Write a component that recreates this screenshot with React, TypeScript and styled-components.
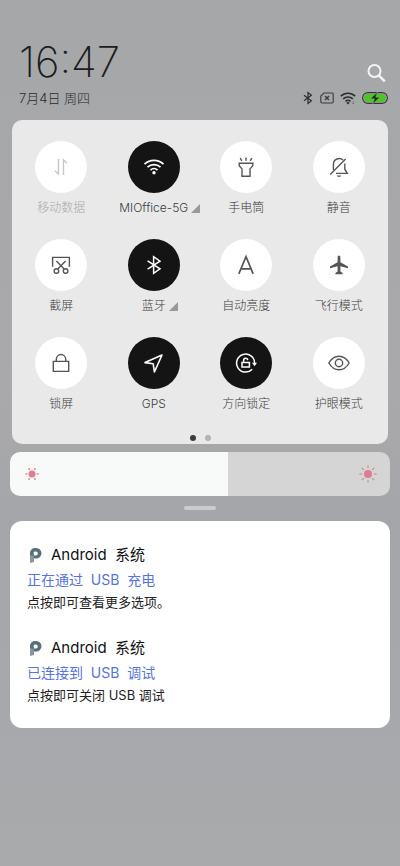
import React, { useState } from "react";
import styled, { createGlobalStyle } from "styled-components";

const GlobalStyle = createGlobalStyle`
  *, *::before, *::after { box-sizing: border-box; }
  body {
    margin: 0;
    min-height: 100vh;
    background: linear-gradient(180deg, #a6a7a9 0%, #a9a9ab 45%, #a5a6aa 60%, #a9aaac 100%);
    font-family: Inter, "Noto Sans CJK SC", sans-serif;
    font-weight: 300;
    color: #1c1c1c;
  }
  button { font: inherit; color: inherit; border: 0; padding: 0; background: none; cursor: pointer; }
  h2, p { margin: 0; font-weight: inherit; }
  svg { display: block; }
`;

const Shade = styled.main`
  display: flex;
  flex-direction: column;
  padding: 36px 10px 24px;
`;

const Header = styled.header`
  display: flex;
  flex-direction: column;
  padding: 0 2px 0 9px;
`;

const HeaderRow = styled.div`
  display: flex;
  justify-content: space-between;
  align-items: center;
`;

const Clock = styled.time`
  font-size: 42px;
  line-height: 52px;
  font-weight: 200;
`;

const SearchButton = styled.button`
  align-self: flex-end;
  padding: 0 2px 5px;
`;

const DateText = styled.time`
  font-size: 13px;
  line-height: 20px;
  color: #2a2a2a;
`;

const StatusIcons = styled.div`
  display: flex;
  align-items: center;
  gap: 6px;
`;

const Panel = styled.section`
  margin: 12px 2px 0;
  padding: 21px 3px 0;
  border-radius: 10px;
  background: #e9e9e9;
`;

const TileGrid = styled.div`
  display: grid;
  grid-template-columns: repeat(4, minmax(0, 1fr));
  row-gap: 21px;
`;

const Tile = styled.button<{ $muted?: boolean }>`
  display: flex;
  flex-direction: column;
  align-items: center;
  gap: 5px;
  font-size: 12px;
  line-height: 20px;
  white-space: nowrap;
  color: ${(p) => (p.$muted ? "#a8a8a8" : "#3c3c3c")};
`;

const TileDisc = styled.span<{ $on?: boolean; $muted?: boolean }>`
  display: flex;
  align-items: center;
  justify-content: center;
  width: 52px;
  height: 52px;
  border-radius: 50%;
  background: ${(p) => (p.$on ? "#141414" : "#ffffff")};
  color: ${(p) => (p.$on ? "#ffffff" : p.$muted ? "#c6c6c6" : "#555555")};
`;

const TileLabel = styled.span<{ $expand?: boolean }>`
  display: flex;
  align-items: center;
  gap: 3px;
  padding-left: ${(p) => (p.$expand ? "12px" : "0")};
`;

const Pager = styled.div`
  display: flex;
  justify-content: center;
  gap: 9px;
  margin-top: 18px;
  padding: 3px 0;
`;

const PagerDot = styled.span<{ $current?: boolean }>`
  width: 6px;
  height: 6px;
  border-radius: 50%;
  background: ${(p) => (p.$current ? "#3c3c3c" : "#b4b4b4")};
`;

const Brightness = styled.label`
  position: relative;
  display: block;
  height: 44px;
  margin-top: 8px;
  border-radius: 10px;
  overflow: hidden;
`;

const BrightnessRange = styled.input`
  appearance: none;
  display: block;
  width: 100%;
  height: 100%;
  margin: 0;
  background: linear-gradient(to right, #f8f9f9 var(--level), #d5d5d5 var(--level));
  cursor: pointer;
  &::-webkit-slider-thumb { appearance: none; width: 1px; height: 44px; }
`;

const SunBadge = styled.span<{ $side: "left" | "right" }>`
  position: absolute;
  top: 13px;
  ${(p) => p.$side}: 13px;
  pointer-events: none;
`;

const Handle = styled.div`
  align-self: center;
  width: 32px;
  height: 4px;
  margin: 10px 0 11px;
  border-radius: 2px;
  background: #cbcbcc;
`;

const Notifications = styled.section`
  display: flex;
  flex-direction: column;
  gap: 25px;
  padding: 22px 17px 24px;
  border-radius: 12px;
  background: #ffffff;
`;

const Notice = styled.article`
  display: flex;
  flex-direction: column;
  white-space: pre-wrap;
  font-weight: 400;
`;

const NoticeApp = styled.header`
  display: flex;
  align-items: center;
  gap: 9px;
  font-size: 15px;
  line-height: 24px;
  color: #111111;
`;

const NoticeTitle = styled.h2`
  font-size: 14px;
  line-height: 26px;
  color: #5673de;
`;

const NoticeText = styled.p`
  font-size: 13px;
  line-height: 18px;
  color: #222222;
`;

type LineProps = { children: React.ReactNode; width?: number };

const LineIcon = ({ children, width = 1.4 }: LineProps) => (
  <svg width="24" height="24" viewBox="0 0 24 24" fill="none" stroke="currentColor" strokeWidth={width} aria-hidden="true">
    {children}
  </svg>
);

const DataIcon = () => (
  <LineIcon>
    <path d="M9.5 4v15.2L6 15.8" />
    <path d="M14.5 20V4.8L18 8.2" />
  </LineIcon>
);

const WifiIcon = () => (
  <LineIcon width={1.7}>
    <path d="M2.5 9.2a13.6 13.6 0 0 1 19 0" />
    <path d="M5.5 12.2a9.3 9.3 0 0 1 13 0" />
    <path d="M8.5 15.1a5 5 0 0 1 7 0" />
    <circle cx="12" cy="17.7" r="1.7" fill="currentColor" stroke="none" />
  </LineIcon>
);

const TorchIcon = () => (
  <LineIcon>
    <path d="M5.2 8.2h13.6v2.6L16 13.9v7.3H8v-7.3l-2.8-3.1z" />
    <path d="M12 2.6v3.2M6.2 3.2l1.6 2.7M17.8 3.2l-1.6 2.7" />
  </LineIcon>
);

const BellOffIcon = () => (
  <LineIcon>
    <path d="M6.4 15V9.2A5.7 5.7 0 0 1 16 5.1M17.8 8.6v5.6l2.5 4.2H9" />
    <path d="M3.2 19.4 18.6 4" />
    <path d="M9.6 20.6h4.8a2.5 1.9 0 0 1-4.8 0z" fill="currentColor" stroke="none" />
  </LineIcon>
);

const ScreenshotIcon = () => (
  <LineIcon>
    <path d="M3.6 13.8V4.4h16.8v9.4" />
    <circle cx="7.4" cy="18" r="2.3" />
    <circle cx="16.6" cy="18" r="2.3" />
    <path d="M8.8 16.1 16.6 8M15.2 16.1 7.4 8" />
  </LineIcon>
);

const BluetoothIcon = () => (
  <LineIcon width={1.5}>
    <path d="m5.6 7.8 12.4 8-6.4 4.6V3.6L18 8.2l-12.400 8" />
  </LineIcon>
);

const AutoIcon = () => (
  <LineIcon width={1.7}>
    <path d="M4.8 20.800 12 3.600l7.200 17.200M7 15.800h10" />
  </LineIcon>
);

const PlaneIcon = () => (
  <LineIcon>
    <path
      d="M12 2.600c.9 0 1.4.9 1.4 2v4.600l7.600 4.400v1.700l-7.600-2v5.100l2.200 1.500v1.300H8.400v-1.300l2.200-1.500v-5.100l-7.600 2v-1.700l7.600-4.400V4.600c0-1.100.5-2 1.400-2z"
      fill="currentColor"
      stroke="none"
    />
  </LineIcon>
);

const LockIcon = () => (
  <LineIcon>
    <path d="M4.300 10.400h15.400v10H4.300z" />
    <path d="M7.300 10.400V8.200a4.700 4.700 0 0 1 9.400 0v2.200" />
  </LineIcon>
);

const LocateIcon = () => (
  <LineIcon width={1.6}>
    <path d="M20 4 3 11.600l8.200 1.200L12.400 21z" strokeLinejoin="round" />
  </LineIcon>
);

const RotateLockIcon = () => (
  <LineIcon width={1.5}>
    <path d="M18.200 18.200A9 9 0 1 1 20.600 12" />
    <path d="M18 11.800h5l-2.400 3.400z" fill="currentColor" stroke="none" />
    <path d="M8 11.600h7.400v4.400H8z" />
    <path d="M9.600 11.600V9.500a2.100 2.100 0 0 1 4.200-.4" />
  </LineIcon>
);

const EyeIcon = () => (
  <LineIcon>
    <path d="M1.800 12C4.400 7.600 8 5.200 12 5.200s7.600 2.400 10.200 6.800c-2.600 4.400-6.200 6.800-10.200 6.800S4.400 16.400 1.800 12z" />
    <circle cx="12" cy="12" r="3.700" />
  </LineIcon>
);

const ExpandMark = () => (
  <svg width="9" height="9" viewBox="0 0 9 9" aria-hidden="true">
    <path d="M9 0v9H0z" fill="#999999" />
  </svg>
);

const SearchIcon = () => (
  <svg width="20" height="20" viewBox="0 0 20 20" fill="none" stroke="#f4f4f4" strokeWidth="2" aria-hidden="true">
    <circle cx="8.5" cy="8" r="6" />
    <path d="m12.8 12.4 6 6" strokeWidth="2.4" />
  </svg>
);

const StatusBluetooth = () => (
  <svg width="12" height="14" viewBox="0 0 12 14" fill="none" stroke="#2e2e2e" strokeWidth="1.2" aria-hidden="true">
    <path d="m2 4.200 7.400 5.600L6 12.600V1.400l3.400 2.800L2 9.800" />
  </svg>
);

const StatusSim = () => (
  <svg width="14" height="12" viewBox="0 0 14 12" fill="none" stroke="#3a3a3a" strokeWidth="1.1" aria-hidden="true">
    <path d="M4 1h8a1.200 1.200 0 0 1 1.200 1.200v7.600A1.200 1.200 0 0 1 12 11H2A1.200 1.200 0 0 1 .8 9.800V4z" />
    <path d="m5 4 4 4M9 4 5 8" strokeWidth="1.4" />
  </svg>
);

const StatusWifi = () => (
  <svg width="16" height="13" viewBox="0 0 16 13" fill="none" stroke="#2e2e2e" strokeWidth="1.6" aria-hidden="true">
    <path d="M.8 4.200a10.400 10.400 0 0 1 14.400 0M3.200 6.900a7 7 0 0 1 9.600 0M5.500 9.400a3.700 3.700 0 0 1 5 0" />
    <path d="m8 12.600-1.700-1.900a2.500 2.500 0 0 1 3.400 0z" fill="#2e2e2e" stroke="none" />
    <path d="M13.200 8.800v3.200M11.900 10.800l1.300 1.300 1.300-1.300" stroke="#77787a" strokeWidth=".8" />
  </svg>
);

const StatusBattery = () => (
  <svg width="26" height="12" viewBox="0 0 26 12" aria-hidden="true">
    <rect x=".6" y=".6" width="24.8" height="10.8" rx="5.4" fill="none" stroke="#343834" strokeWidth="1.1" />
    <rect x="2" y="2" width="22" height="8" rx="4" fill="#4fc32c" />
    <path d="M15.500 0 8.500 6.800h4L10.500 12l7.200-6.800h-4z" fill="#1d241b" stroke="#73c75b" strokeWidth=".5" />
  </svg>
);

const RAYS_SMALL = [0, 60, 120, 180, 240, 300];
const RAYS_LARGE = [0, 45, 90, 135, 180, 225, 270, 315];

const Sun = ({ large }: { large?: boolean }) => (
  <svg width="18" height="18" viewBox="0 0 18 18" fill="#dc7d94" stroke="#dc7d94" strokeLinecap="round" aria-hidden="true">
    <circle cx="9" cy="9" r={large ? 4 : 3.5} stroke="none" />
    {(large ? RAYS_LARGE : RAYS_SMALL).map((angle) => (
      <path
        key={angle}
        d={large ? "M15.300 9h2" : "M14.300 9h.8"}
        strokeWidth={large ? 1 : 1.4}
        transform={`rotate(${angle} 9 9)`}
      />
    ))}
  </svg>
);

const AppMark = () => (
  <svg width="15" height="16" viewBox="0 0 15 16" aria-hidden="true">
    <path d="M3 7h4v8l-4 1z" fill="#86999f" />
    <path
      d="M3 8V6a5 5 0 0 1 5-5h1.200a5.300 5.300 0 0 1 0 10.600H6.800V8.400h2a2 2 0 0 0 0-4h-.600C7 4.400 6.600 5 6.600 6v3z"
      fill="#557178"
    />
  </svg>
);

type TileData = {
  label: string;
  icon: React.ReactNode;
  on?: boolean;
  muted?: boolean;
  expand?: boolean;
};

const TILES: TileData[] = [
  { label: "移动数据", icon: <DataIcon />, muted: true },
  { label: "MIOffice-5G", icon: <WifiIcon />, on: true, expand: true },
  { label: "手电筒", icon: <TorchIcon /> },
  { label: "静音", icon: <BellOffIcon /> },
  { label: "截屏", icon: <ScreenshotIcon /> },
  { label: "蓝牙", icon: <BluetoothIcon />, on: true, expand: true },
  { label: "自动亮度", icon: <AutoIcon /> },
  { label: "飞行模式", icon: <PlaneIcon /> },
  { label: "锁屏", icon: <LockIcon /> },
  { label: "GPS", icon: <LocateIcon />, on: true },
  { label: "方向锁定", icon: <RotateLockIcon />, on: true },
  { label: "护眼模式", icon: <EyeIcon /> },
];

const NOTICES = [
  { app: "Android  系统", title: "正在通过  USB  充电", text: "点按即可查看更多选项。" },
  { app: "Android  系统", title: "已连接到  USB  调试", text: "点按即可关闭 USB 调试" },
];

export default function App() {
  const [level, setLevel] = useState(575);
  return (
    <>
      <GlobalStyle />
      <Shade lang="zh-CN">
        <Header>
          <HeaderRow>
            <Clock>16:47</Clock>
            <SearchButton type="button" aria-label="搜索">
              <SearchIcon />
            </SearchButton>
          </HeaderRow>
          <HeaderRow>
            <DateText>7月4日 周四</DateText>
            <StatusIcons>
              <StatusBluetooth />
              <StatusSim />
              <StatusWifi />
              <StatusBattery />
            </StatusIcons>
          </HeaderRow>
        </Header>

        <Panel>
          <TileGrid>
            {TILES.map((tile) => (
              <Tile key={tile.label} type="button" $muted={tile.muted} aria-pressed={!!tile.on}>
                <TileDisc $on={tile.on} $muted={tile.muted}>
                  {tile.icon}
                </TileDisc>
                <TileLabel $expand={tile.expand}>
                  {tile.label}
                  {tile.expand && <ExpandMark />}
                </TileLabel>
              </Tile>
            ))}
          </TileGrid>
          <Pager>
            <PagerDot $current />
            <PagerDot />
          </Pager>
        </Panel>

        <Brightness>
          <BrightnessRange
            type="range"
            aria-label="亮度"
            min={0}
            max={1000}
            value={level}
            onChange={(e) => setLevel(Number(e.target.value))}
            style={{ "--level": `${level / 10}%` } as React.CSSProperties}
          />
          <SunBadge $side="left">
            <Sun />
          </SunBadge>
          <SunBadge $side="right">
            <Sun large />
          </SunBadge>
        </Brightness>

        <Handle />

        <Notifications>
          {NOTICES.map((notice) => (
            <Notice key={notice.title}>
              <NoticeApp>
                <AppMark />
                {notice.app}
              </NoticeApp>
              <NoticeTitle>{notice.title}</NoticeTitle>
              <NoticeText>{notice.text}</NoticeText>
            </Notice>
          ))}
        </Notifications>
      </Shade>
    </>
  );
}
